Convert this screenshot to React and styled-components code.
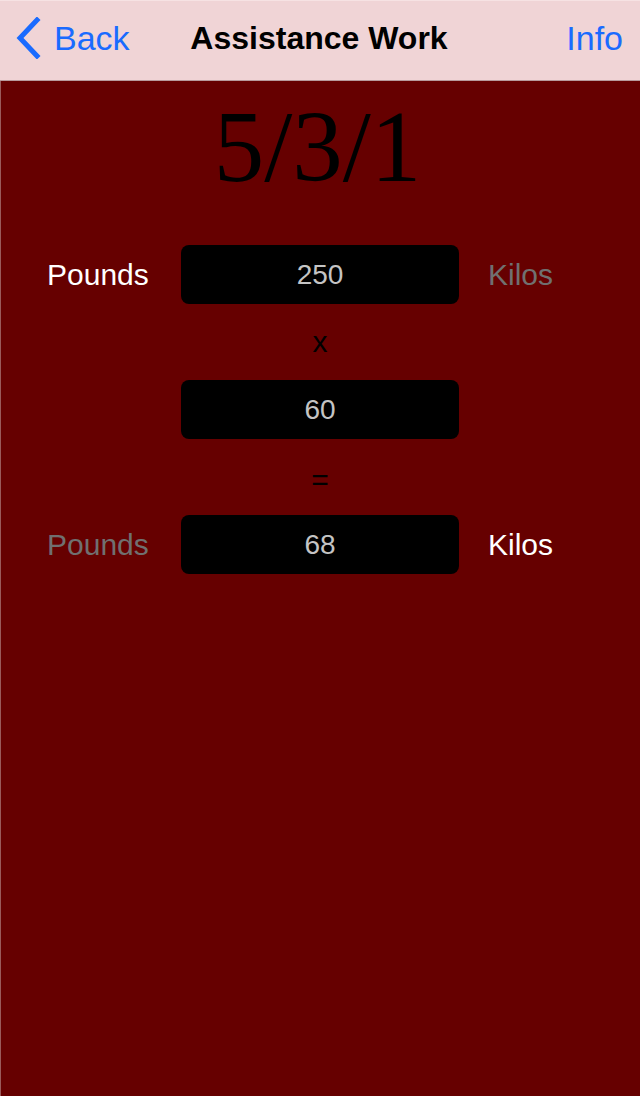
import styled, { createGlobalStyle } from "styled-components";

const GlobalStyle = createGlobalStyle`
html, body {
  margin: 0;
  padding: 0;
  background: #660000;
}
#root {
  min-height: 100vh;
}
`

const Screen = styled.div`
display: flex;
flex-direction: column;
min-height: 100vh;
font-family: "Liberation Sans", Arial, sans-serif;
`
const NavBar = styled.div`
height: 81px;
box-sizing: border-box;
display: grid;
grid-template-columns: 1fr auto 1fr;
align-items: center;
padding: 0 17px 5px 15px;
background: #f0d4d6;
border-top: 1px solid #f6e2e3;
border-bottom: 1px solid #b89a9c;
`
const BackButton = styled.div`
display: flex;
align-items: center;
gap: 13px;
color: #1a6bff;
font-size: 34px;
cursor: pointer;
`
const NavTitle = styled.div`
font-size: 32px;
font-weight: 700;
color: #000;
`
const InfoButton = styled.div`
justify-self: end;
color: #1a6bff;
font-size: 34px;
cursor: pointer;
`
const Body = styled.div`
flex: 1;
background: #660000;
border-left: 1px solid #9a5a5a;
`
const Logo = styled.div`
font-family: "Liberation Serif", "Times New Roman", serif;
font-size: 101px;
line-height: 1;
text-align: center;
color: #000;
padding: 16px 6px 0 0;
height: 164px;
box-sizing: border-box;
`
const Calc = styled.div`
display: grid;
grid-template-columns: 180px 278px 1fr;
`
const Label = styled.div`
display: flex;
align-items: center;
height: 59px;
font-size: 30px;
color: ${props => props.active ? "#ffffff" : "#707070"};
padding-left: ${props => props.side === "left" ? "46px" : "29px"};
`
const Field = styled.div`
height: 59px;
border-radius: 8px;
background: #000;
display: flex;
align-items: center;
justify-content: center;
font-size: 28px;
color: #c4c4c4;
`
const Operator = styled.div`
grid-column: 2;
height: 76px;
display: flex;
align-items: center;
justify-content: center;
font-size: 30px;
color: #000;
padding-top: ${props => props.drop || "0px"};
box-sizing: border-box;
`
const Spacer = styled.div``

const Chevron = () => (
    <svg width="26" height="42" viewBox="0 0 26 42">
        <polyline points="22,3 5,21 22,39" fill="none" stroke="#1a6bff" strokeWidth="5" strokeLinecap="square" strokeLinejoin="miter" />
    </svg>
)

const App = () => {
    return (
        <>
            <GlobalStyle />
            <Screen>
                <NavBar>
                    <BackButton><Chevron />Back</BackButton>
                    <NavTitle>Assistance Work</NavTitle>
                    <InfoButton>Info</InfoButton>
                </NavBar>
                <Body>
                    <Logo>5/3/1</Logo>
                    <Calc>
                        <Label side="left" active>Pounds</Label>
                        <Field>250</Field>
                        <Label side="right">Kilos</Label>

                        <Spacer />
                        <Operator>x</Operator>
                        <Spacer />

                        <Spacer />
                        <Field>60</Field>
                        <Spacer />

                        <Spacer />
                        <Operator drop="6px">=</Operator>
                        <Spacer />

                        <Label side="left">Pounds</Label>
                        <Field>68</Field>
                        <Label side="right" active>Kilos</Label>
                    </Calc>
                </Body>
            </Screen>
        </>
    );
}

export default App;
